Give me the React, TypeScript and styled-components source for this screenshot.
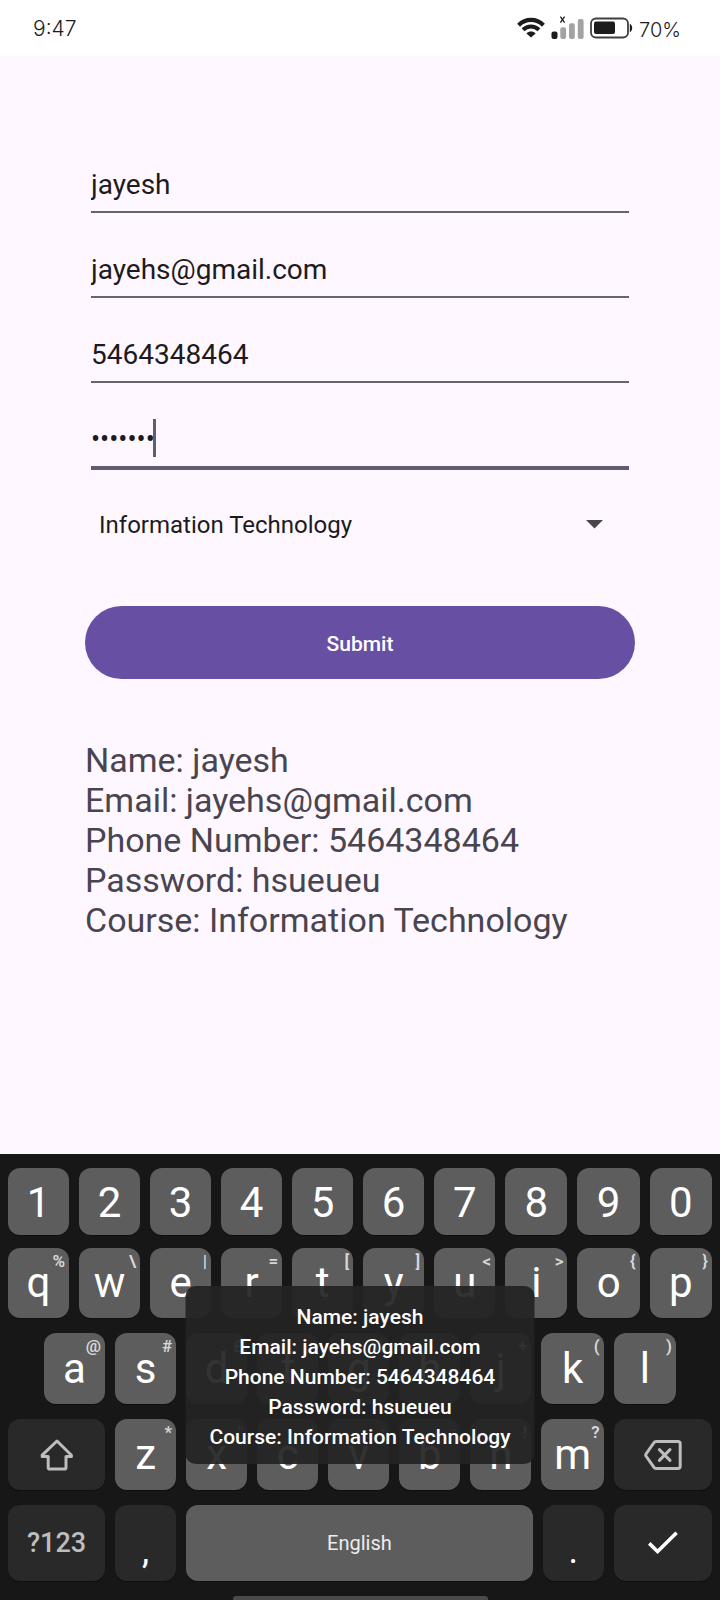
import React, { useState } from "react";
import styled, { createGlobalStyle, css } from "styled-components";

const GlobalStyle = createGlobalStyle`
  *, *::before, *::after { box-sizing: border-box; }
  body {
    margin: 0;
    font-family: Roboto, "Liberation Sans", sans-serif;
    background: #fef7ff;
  }
  button, input, select { font-family: inherit; }
`;

const Screen = styled.div`
  display: flex;
  flex-direction: column;
  min-height: 100vh;
  background: #fef7ff;
`;

/* Status bar */

const StatusBar = styled.header`
  display: flex;
  align-items: center;
  justify-content: space-between;
  height: 56px;
  padding: 0 39px 0 33px;
  background: #ffffff;
  color: #1c1c1c;
  font-family: Inter, Roboto, sans-serif;
  font-size: 21px;
  font-weight: 300;
  line-height: 26px;
`;

const Clock = styled.time`
  padding-top: 2px;
`;

const StatusIcons = styled.div`
  display: flex;
  align-items: center;
  gap: 6px;
`;

const BatteryLevel = styled.span`
  padding-top: 4px;
  font-size: 20px;
`;

/* Form */

const Main = styled.main`
  flex: 1;
  padding: 101px 85px 64px;
`;

const Form = styled.form`
  display: flex;
  flex-direction: column;
`;

const Fields = styled.div`
  display: flex;
  flex-direction: column;
  gap: 29px;
  padding: 0 6px;
`;

const Field = styled.div`
  position: relative;
  display: flex;
`;

const TextInput = styled.input<{ $active?: boolean }>`
  flex: 1;
  min-width: 0;
  height: ${(p) => (p.$active ? 58 : 56)}px;
  padding: 0;
  border: 0;
  border-bottom: ${(p) => (p.$active ? "4px solid #625b71" : "2px solid #68646d")};
  border-radius: 0;
  outline: 0;
  background: transparent;
  color: #1d1b20;
  font-size: ${(p) => (p.$active ? 27 : 28)}px;
  line-height: 34px;
`;

const Caret = styled.span`
  position: absolute;
  left: 62px;
  top: 7px;
  width: 3px;
  height: 38px;
  background: #625b71;
`;

const CourseField = styled.div`
  position: relative;
  display: flex;
  margin-top: 30px;
  color: #49454f;
`;

const CourseSelect = styled.select`
  flex: 1;
  height: 50px;
  padding: 0 48px 0 14px;
  border: 0;
  outline: 0;
  appearance: none;
  background: transparent;
  color: #1d1b20;
  font-size: 24px;
  line-height: 28px;
`;

const DropArrow = styled.svg`
  position: absolute;
  right: 32px;
  top: 20px;
  pointer-events: none;
`;

const SubmitButton = styled.button`
  height: 73px;
  margin-top: 56px;
  padding: 2px 24px 0;
  border: 0;
  border-radius: 37px;
  background: #6750a4;
  color: #ffffff;
  font-size: 21px;
  font-weight: 500;
  line-height: 26px;
`;

const Summary = styled.section`
  margin-top: 61px;
  color: #49454f;
  font-size: 34px;
  line-height: 40px;
`;

const SummaryLine = styled.p`
  margin: 0;
`;

/* Keyboard */

const Keyboard = styled.section`
  position: relative;
  display: flex;
  flex-direction: column;
  gap: 13px;
  padding: 14px 8px 0;
  background: #171717;
`;

const LetterRows = styled.div`
  display: flex;
  flex-direction: column;
  gap: 15px;
`;

const KeyRow = styled.div<{ $columns: string; $height: number; $inset?: boolean }>`
  display: grid;
  grid-template-columns: ${(p) => p.$columns};
  gap: 10px;
  height: ${(p) => p.$height}px;
  padding: 0 ${(p) => (p.$inset ? 36 : 0)}px;
`;

const keyTones = {
  digit: css`
    padding-top: 3px;
    background: #5d5d5d;
    color: #ffffff;
    font-size: 42px;
  `,
  letter: css`
    background: #5d5d5d;
    color: #ffffff;
    font-size: 42px;
  `,
  space: css`
    background: #5d5d5d;
    color: #ededed;
    font-size: 20px;
  `,
  action: css`
    background: #292929;
    color: #bdbdbd;
    font-size: 27px;
    font-weight: 500;
  `,
  punctuation: css`
    padding-top: 15px;
    background: #292929;
    color: #ffffff;
    font-size: 36px;
  `,
};

const KeyCap = styled.button<{ $tone: keyof typeof keyTones }>`
  position: relative;
  display: flex;
  align-items: center;
  justify-content: center;
  min-width: 0;
  padding: 0;
  border: 0;
  border-radius: 12px;
  box-shadow: 0 1px 0 #0f0f0f;
  font-weight: 400;
  line-height: 48px;
  ${(p) => keyTones[p.$tone]}
`;

const KeyHint = styled.span`
  position: absolute;
  top: 3px;
  right: 4px;
  color: #d8d8d8;
  font-size: 17px;
  font-weight: 600;
  line-height: 20px;
`;

const NavArea = styled.div`
  display: flex;
  align-items: flex-end;
  justify-content: center;
  height: 6px;
`;

const NavHandle = styled.div`
  width: 255px;
  height: 4px;
  border-radius: 3px 3px 0 0;
  background: #4a4a4a;
`;

const Toast = styled.div`
  position: absolute;
  top: 132px;
  left: 50%;
  transform: translateX(-50%);
  padding: 16px 24px 12px;
  border-radius: 10px;
  background: rgba(35, 35, 35, 0.93);
  color: #ffffff;
  font-size: 21px;
  font-weight: 500;
  line-height: 30px;
  text-align: center;
  white-space: nowrap;
`;

/* Icons */

const WifiIcon = () => (
  <svg width="28" height="22" viewBox="0 0 28 22" fill="none" stroke="#1c1c1c" aria-label="Wi-Fi">
    <path d="M1.6 8.2C8.6 1.2 19.4 1.2 26.4 8.2" strokeWidth="4.2" />
    <path d="M6 12.8C10.6 8.4 17.4 8.4 22 12.8" strokeWidth="4" />
    <path d="M14 20.6L9.4 16.4C12 14 16 14 18.6 16.4Z" fill="#1c1c1c" stroke="none" />
  </svg>
);

const SignalIcon = () => (
  <svg width="33" height="26" viewBox="0 0 33 26" aria-label="No signal">
    <rect x="0.5" y="16.4" width="6" height="7.5" rx="2" fill="#1c1c1c" />
    <rect x="9.3" y="12.2" width="5.8" height="11.7" rx="2" fill="#a3a3a3" />
    <rect x="18" y="8.2" width="5.8" height="15.7" rx="2" fill="#a3a3a3" />
    <rect x="26.8" y="4" width="5.8" height="19.9" rx="2" fill="#a3a3a3" />
    <path d="M9.4 1.6L13.6 7.6M13.6 1.6L9.4 7.6" stroke="#1c1c1c" strokeWidth="1.3" />
  </svg>
);

const BatteryIcon = () => (
  <svg width="43" height="22" viewBox="0 0 43 22" aria-label="Battery">
    <rect x="1" y="1.5" width="37" height="19" rx="5" fill="#ffffff" stroke="#3f3f3f" strokeWidth="1.8" />
    <rect x="4" y="4.5" width="21" height="12.6" rx="2" fill="#1c1c1c" />
    <path d="M39.8 6.8C43 8.4 43 13.6 39.8 15.2Z" fill="#1c1c1c" />
  </svg>
);

const ShiftIcon = () => (
  <svg width="34" height="32" viewBox="0 0 34 32" fill="none" stroke="currentColor" strokeWidth="3" strokeLinejoin="round">
    <path d="M17 2L31.4 16.2V17.6H26V28.4Q26 30 24.4 30H9.8Q8.2 30 8.2 28.4V17.6H2.2V16.2Z" />
  </svg>
);

const BackspaceIcon = () => (
  <svg width="38" height="30" viewBox="0 0 38 30" fill="none" stroke="currentColor" strokeWidth="3" strokeLinejoin="round">
    <path d="M12 1.6H34Q36.2 1.6 36.2 3.8V26.2Q36.2 28.4 34 28.4H12Q10.6 28.4 9.8 27.2L2 16Q1.4 15 2 14L9.8 2.8Q10.6 1.6 12 1.6Z" />
    <path d="M15.4 9.6L26 20.4M26 9.6L15.4 20.4" strokeLinecap="round" />
  </svg>
);

const CheckIcon = () => (
  <svg width="30" height="24" viewBox="0 0 30 24" fill="none" stroke="#ffffff" strokeWidth="3.6">
    <path d="M1.2 12.4L9.6 20.6L28.6 1.8" />
  </svg>
);

/* Key data */

type KeySpec = { label: string; hint?: string };

const pair = (labels: string, hints = ""): KeySpec[] =>
  labels.split("").map((label, i) => ({ label, hint: hints[i] }));

const digits = pair("1234567890");
const topRow = pair("qwertyuiop", "%\\|=[]<>{}");
const homeRow = pair("asdfghjkl", "@#£_&-+()");
const bottomRow = pair("zxcvbnm", "*\"':;!?");

const columns = {
  ten: "repeat(7, minmax(0, 100fr)) repeat(3, minmax(0, 102fr))",
  nine: "repeat(7, minmax(0, 100fr)) repeat(2, minmax(0, 102fr))",
  shift: "159fr repeat(6, minmax(0, 100fr)) 102fr 161fr",
  space: "159fr 100fr 568fr 100fr 161fr",
};

const Keys = ({ keys, tone = "letter" }: { keys: KeySpec[]; tone?: "letter" | "digit" }) => (
  <>
    {keys.map(({ label, hint }) => (
      <KeyCap key={label} type="button" $tone={tone}>
        {label}
        {hint && <KeyHint>{hint}</KeyHint>}
      </KeyCap>
    ))}
  </>
);

export default function App() {
  const [name, setName] = useState("jayesh");
  const [email, setEmail] = useState("jayehs@gmail.com");
  const [phone, setPhone] = useState("5464348464");
  const [password, setPassword] = useState("hsueueu");
  const [course, setCourse] = useState("Information Technology");

  const summary = [
    `Name: ${name}`,
    `Email: ${email}`,
    `Phone Number: ${phone}`,
    `Password: ${password}`,
    `Course: ${course}`,
  ];
  const lines = summary.map((line) => <SummaryLine key={line}>{line}</SummaryLine>);

  return (
    <Screen>
      <GlobalStyle />
      <StatusBar>
        <Clock>9:47</Clock>
        <StatusIcons>
          <WifiIcon />
          <SignalIcon />
          <BatteryIcon />
          <BatteryLevel>70%</BatteryLevel>
        </StatusIcons>
      </StatusBar>

      <Main>
        <Form onSubmit={(e) => e.preventDefault()}>
          <Fields>
            <Field>
              <TextInput aria-label="Name" value={name} onChange={(e) => setName(e.target.value)} />
            </Field>
            <Field>
              <TextInput aria-label="Email" type="email" value={email} onChange={(e) => setEmail(e.target.value)} />
            </Field>
            <Field>
              <TextInput aria-label="Phone Number" type="tel" value={phone} onChange={(e) => setPhone(e.target.value)} />
            </Field>
            <Field>
              <TextInput
                $active
                aria-label="Password"
                type="password"
                value={password}
                onChange={(e) => setPassword(e.target.value)}
              />
              <Caret />
            </Field>
          </Fields>
          <CourseField>
            <CourseSelect aria-label="Course" value={course} onChange={(e) => setCourse(e.target.value)}>
              <option>Information Technology</option>
            </CourseSelect>
            <DropArrow width="17" height="9" viewBox="0 0 17 9">
              <path d="M0 0H17L8.5 8.6Z" fill="currentColor" />
            </DropArrow>
          </CourseField>
          <SubmitButton type="submit">Submit</SubmitButton>
        </Form>
        <Summary>{lines}</Summary>
      </Main>

      <Keyboard aria-label="Keyboard">
        <KeyRow $columns={columns.ten} $height={67}>
          <Keys keys={digits} tone="digit" />
        </KeyRow>
        <LetterRows>
          <KeyRow $columns={columns.ten} $height={70}>
            <Keys keys={topRow} />
          </KeyRow>
          <KeyRow $columns={columns.nine} $height={71} $inset>
            <Keys keys={homeRow} />
          </KeyRow>
          <KeyRow $columns={columns.shift} $height={71}>
            <KeyCap type="button" $tone="action" aria-label="Shift">
              <ShiftIcon />
            </KeyCap>
            <Keys keys={bottomRow} />
            <KeyCap type="button" $tone="action" aria-label="Backspace">
              <BackspaceIcon />
            </KeyCap>
          </KeyRow>
          <KeyRow $columns={columns.space} $height={76}>
            <KeyCap type="button" $tone="action">?123</KeyCap>
            <KeyCap type="button" $tone="punctuation">,</KeyCap>
            <KeyCap type="button" $tone="space">English</KeyCap>
            <KeyCap type="button" $tone="punctuation">.</KeyCap>
            <KeyCap type="button" $tone="action" aria-label="Done">
              <CheckIcon />
            </KeyCap>
          </KeyRow>
        </LetterRows>
        <NavArea>
          <NavHandle />
        </NavArea>
        <Toast role="status">{lines}</Toast>
      </Keyboard>
    </Screen>
  );
}
